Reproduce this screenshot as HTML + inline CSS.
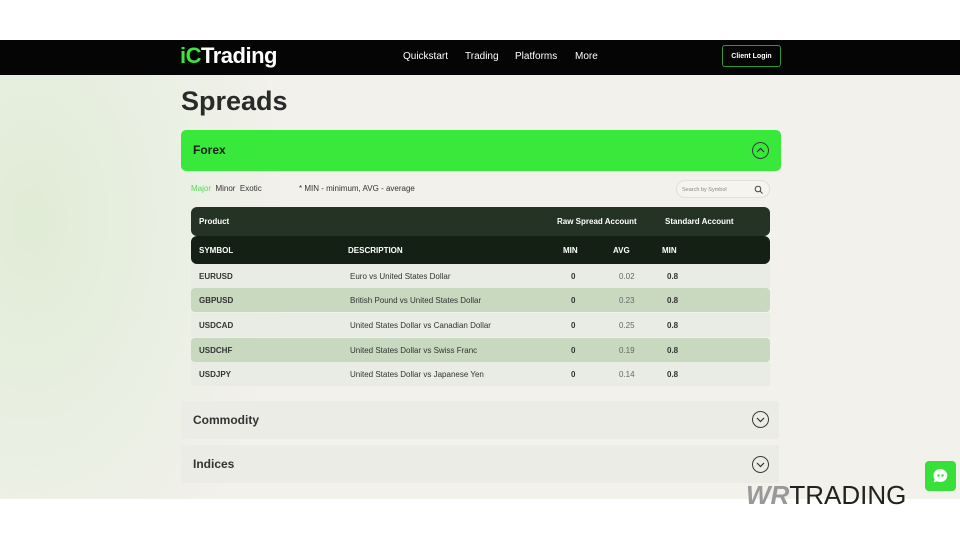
<!DOCTYPE html>
<html><head><meta charset="utf-8"><style>
*{margin:0;padding:0;box-sizing:border-box}
body{width:960px;height:540px;background:#fff;font-family:"Liberation Sans",sans-serif;position:relative;overflow:hidden}
.page{position:absolute;left:0;top:40px;width:960px;height:459px;background:radial-gradient(ellipse 260px 420px at 30px 180px,#e0ecd6 0%,#e9efe2 50%,rgba(242,241,235,0) 100%),#f2f1eb}
.nav{position:absolute;left:0;top:40px;width:960px;height:35px;background:#050505}
.logo{position:absolute;left:180px;top:43px;font-size:22px;font-weight:bold;color:#fff;letter-spacing:-0.5px}
.logo span{color:#3ae83a}
.menu{position:absolute;top:51px;font-size:10px;color:#fff}
.login{position:absolute;left:722px;top:45px;width:59px;height:22px;border:1px solid #2f9a2f;border-radius:3px;color:#fff;font-size:7px;font-weight:bold;text-align:center;line-height:21px}
h1{position:absolute;left:181px;top:86px;font-size:27px;color:#2a2a2a;font-weight:bold}
.forex{position:absolute;left:181px;top:130px;width:600px;height:41px;background:#38e83a;border-radius:5px}
.forex b{position:absolute;left:12px;top:13px;font-size:12px;color:#152015}
.circ{position:absolute;width:17px;height:17px;border:1.3px solid #3a3a3a;border-radius:50%}
.tabs{position:absolute;left:191px;top:184px;font-size:8px;color:#333}
.note{position:absolute;left:299px;top:184px;font-size:8px;color:#333}
.search{position:absolute;left:676px;top:180px;width:94px;height:18px;border:1px solid #e0e0dc;border-radius:9px;background:#f5f4ef;font-size:5.5px;color:#888;padding:6px 0 0 5px}
.row{position:absolute;left:191px;width:579px;height:24px;font-size:8px;color:#333}
.row div{position:absolute;top:8px}
.hd{background:#1d2a1d;color:#fff;font-weight:bold;border-radius:6px}
.acc{position:absolute;left:181px;width:598px;height:38px;background:#ebece6}
.acc b{position:absolute;left:12px;top:12px;font-size:12px;color:#333}
</style></head><body>
<div class="page"></div>
<div class="nav"></div>
<div class="logo"><span>iC</span>Trading</div>
<div class="menu" style="left:403px">Quickstart</div>
<div class="menu" style="left:465px">Trading</div>
<div class="menu" style="left:515px">Platforms</div>
<div class="menu" style="left:575px">More</div>
<div class="login">Client Login</div>
<h1>Spreads</h1>
<div class="forex"><b>Forex</b><div class="circ" style="left:571px;top:12px"><svg width="15" height="15" viewBox="0 0 15 15" style="position:absolute;left:0;top:0"><path d="M4 9l3.5-3.5L11 9" fill="none" stroke="#333" stroke-width="1.2"/></svg></div></div>
<div class="tabs"><span style="color:#5ad65a">Major</span>&nbsp; Minor&nbsp; Exotic</div>
<div class="note">* MIN - minimum, AVG - average</div>
<div class="search">Search by Symbol<svg width="9" height="9" viewBox="0 0 9 9" style="position:absolute;right:6px;top:4px"><circle cx="4" cy="4" r="2.8" fill="none" stroke="#444" stroke-width="1"/><path d="M6 6l2.5 2.5" stroke="#444" stroke-width="1"/></svg></div>
<div class="row hd" style="top:207px;height:29px;background:#253325"><div style="left:8px;top:10px">Product</div><div style="left:366px;top:10px">Raw Spread Account</div><div style="left:474px;top:10px">Standard Account</div></div>
<div class="row hd" style="top:236px;height:28px;background:#142014"><div style="left:8px;top:10px">SYMBOL</div><div style="left:157px;top:10px">DESCRIPTION</div><div style="left:372px;top:10px">MIN</div><div style="left:422px;top:10px">AVG</div><div style="left:471px;top:10px">MIN</div></div>
<div class="row" style="top:264px;background:#e8ece5"><div style="left:8px;font-weight:bold">EURUSD</div><div style="left:159px">Euro vs United States Dollar</div><div style="left:380px;font-weight:bold">0</div><div style="left:428px;color:#666">0.02</div><div style="left:476px;font-weight:bold">0.8</div></div>
<div class="row" style="top:288px;background:#c8d9c0;border-radius:4px"><div style="left:8px;font-weight:bold">GBPUSD</div><div style="left:159px">British Pound vs United States Dollar</div><div style="left:380px;font-weight:bold">0</div><div style="left:428px;color:#666">0.23</div><div style="left:476px;font-weight:bold">0.8</div></div>
<div class="row" style="top:313px;background:#e8ece5"><div style="left:8px;font-weight:bold">USDCAD</div><div style="left:159px">United States Dollar vs Canadian Dollar</div><div style="left:380px;font-weight:bold">0</div><div style="left:428px;color:#666">0.25</div><div style="left:476px;font-weight:bold">0.8</div></div>
<div class="row" style="top:338px;background:#c8d9c0;border-radius:4px"><div style="left:8px;font-weight:bold">USDCHF</div><div style="left:159px">United States Dollar vs Swiss Franc</div><div style="left:380px;font-weight:bold">0</div><div style="left:428px;color:#666">0.19</div><div style="left:476px;font-weight:bold">0.8</div></div>
<div class="row" style="top:362px;background:#e8ece5"><div style="left:8px;font-weight:bold">USDJPY</div><div style="left:159px">United States Dollar vs Japanese Yen</div><div style="left:380px;font-weight:bold">0</div><div style="left:428px;color:#666">0.14</div><div style="left:476px;font-weight:bold">0.8</div></div>
<div class="acc" style="top:401px"><b>Commodity</b><div class="circ" style="left:571px;top:10px"><svg width="15" height="15" viewBox="0 0 15 15" style="position:absolute;left:0;top:0"><path d="M4 6l3.5 3.5L11 6" fill="none" stroke="#333" stroke-width="1.2"/></svg></div></div>
<div class="acc" style="top:445px"><b>Indices</b><div class="circ" style="left:571px;top:11px"><svg width="15" height="15" viewBox="0 0 15 15" style="position:absolute;left:0;top:0"><path d="M4 6l3.5 3.5L11 6" fill="none" stroke="#333" stroke-width="1.2"/></svg></div></div>
<div style="position:absolute;left:925px;top:461px;width:31px;height:30px;background:#38e03a;border-radius:4px"><svg width="31" height="30" viewBox="0 0 31 30"><path d="M15.5 8a7 6.5 0 1 1-3.5 12.2L8.5 21.5l1.2-3.3A7 6.5 0 0 1 15.5 8z" fill="#fff"/><circle cx="13.5" cy="14.5" r="1.2" fill="#38e03a"/><circle cx="17.5" cy="14.5" r="1.2" fill="#38e03a"/></svg></div>
<div style="position:absolute;left:746px;top:480px;font-size:26px;color:#222;letter-spacing:0px"><span style="color:#999;font-weight:bold;font-style:italic">WR</span>TRADING</div>
</body></html>
